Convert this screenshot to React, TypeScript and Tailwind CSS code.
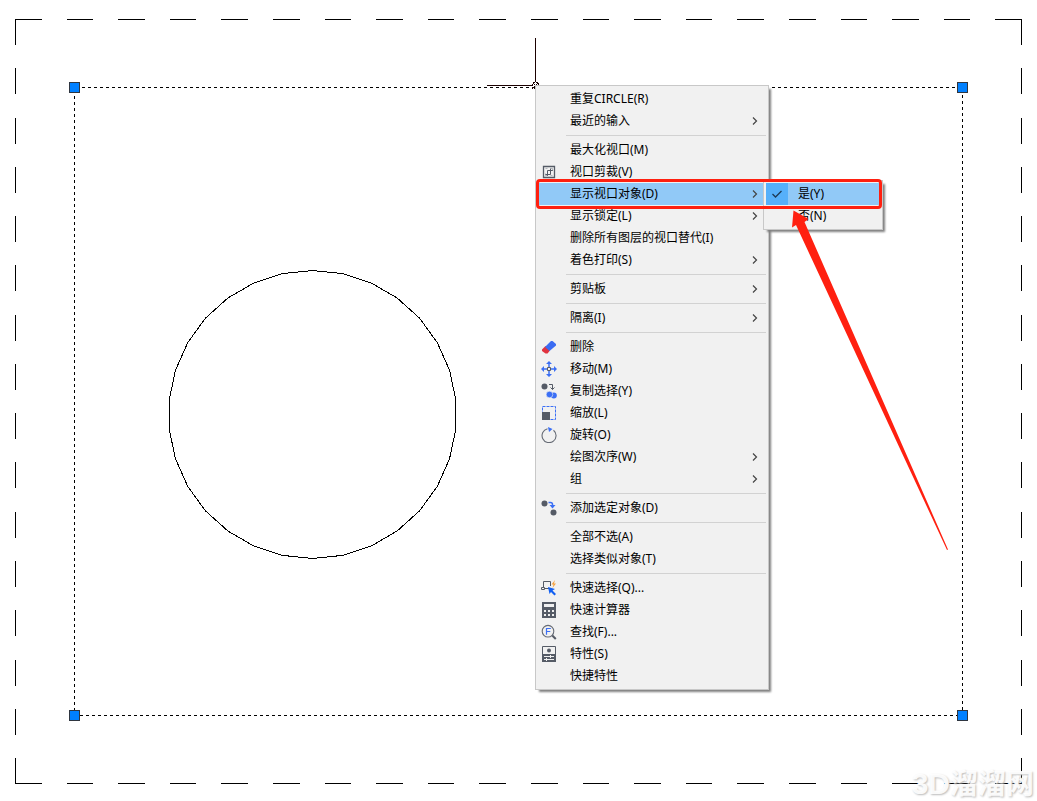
import { Fragment, type ReactNode } from "react";

type Item = { label: string; icon?: ReactNode; sub?: boolean; active?: boolean };

const Icon = ({ children }: { children: ReactNode }) => (
  <svg width="16" height="16" viewBox="0 0 16 16" fill="none" aria-hidden="true">
    {children}
  </svg>
);

const ClipIcon = (
  <Icon>
    <path d="M2.500 2.500h11v11h-11z" stroke="#555b66" strokeWidth="1.300" />
    <path d="M4 10.500h5.500V4.500M6.500 12V6.500H12" stroke="#555b66" />
    <path d="M4.500 4.500h2v0M11.500 11.500h-2M9.500 4.500h2v2M4.500 9.500v2h2" stroke="#9a9ea6" strokeWidth=".7" />
  </Icon>
);

const EraseIcon = (
  <Icon>
    <path d="M1 10.500 4.500 7 9 11.500 6.500 14.500H4.500L1 12z" fill="#e0333f" />
    <path d="M4 8 10 2h1.500L15 5v1.500L8.500 12z" fill="#3b6cf2" />
  </Icon>
);

const MoveIcon = (
  <Icon>
    <path d="M8 2v4M8 10v4M2 8h4M10 8h4" stroke="#3b6ff5" strokeWidth="1.500" />
    <path d="M8 0 11 3H5zM8 16 11 13H5zM0 8 3 5v6zM16 8 13 5v6z" fill="#3b6ff5" />
    <path d="M6.500 6.500h3v3h-3z" stroke="#555b66" fill="#f0f0f0" />
  </Icon>
);

const CopyIcon = (
  <Icon>
    <circle cx="3.500" cy="3.500" r="3" fill="#555b66" />
    <path d="M8 1.500h3.500v5M9.500 4.500l2 2 2-2" stroke="#555b66" />
    <circle cx="12.800" cy="12.500" r="3" fill="#3b6ff5" />
    <circle cx="8.500" cy="11.500" r="3.300" fill="#3b6ff5" stroke="#f0f0f0" strokeWidth=".6" />
  </Icon>
);

const ScaleIcon = (
  <Icon>
    <path d="M1.500 1.500h13v13h-13z" stroke="#3b6ff5" strokeDasharray="3 1" />
    <path d="M1 7h8v8H1z" fill="#555b66" />
  </Icon>
);

const RotateIcon = (
  <Icon>
    <path d="M12.500 3.200A7 7 0 1 1 6.500 1.800" stroke="#666b75" strokeWidth="1.100" />
    <path d="M7 0 11.500 2 8 5z" fill="#3b6ff5" />
  </Icon>
);

const AddIcon = (
  <Icon>
    <circle cx="3.500" cy="3.500" r="3" fill="#555b66" />
    <circle cx="12.500" cy="12.500" r="3" fill="#555b66" />
    <path d="M7.500 2.500h2a2 2 0 0 1 2 2v1" stroke="#3b6ff5" strokeWidth="1.500" />
    <path d="M8.500 5h6l-3 3.500z" fill="#3b6ff5" />
  </Icon>
);

const QuickSelectIcon = (
  <Icon>
    <path d="M2.500 7V1.500h7V6M4 8.500h4" stroke="#555b66" />
    <path d="M.5 7.500h3v2h-3z" stroke="#555b66" />
    <path d="M14 0 10.500 4.500h2L11.500 8 15 3.500h-2z" fill="#f7a13c" />
    <path d="M7 7l7 2-2.500 1.500 3.500 3.500-1.500 1.500-3.500-3.500L8.500 14z" fill="#1260f2" />
  </Icon>
);

const CalcIcon = (
  <Icon>
    <path d="M1 0h14v16H1z" fill="#555b66" />
    <path
      d="M3 2h10v3H3zM3 8h2v2H3zM7 8h2v2H7zM11 8h2v2h-2zM3 12h2v2H3zM7 12h2v2H7zM11 12h2v2h-2z"
      fill="#f0f0f0"
    />
  </Icon>
);

const FindIcon = (
  <Icon>
    <circle cx="7" cy="7.200" r="5.800" stroke="#666b75" strokeWidth="1.100" />
    <path d="M11.300 11.500 14.800 15" stroke="#555b66" strokeWidth="2" />
    <path d="M5.500 10.800V4M5 4.500h4.800M5.500 7.500h3.800" stroke="#3b6ff5" strokeWidth="1.200" />
  </Icon>
);

const PropsIcon = (
  <Icon>
    <path d="M1.500 .5h13v15h-13z" stroke="#555b66" />
    <path d="M1 8h14v8H1z" fill="#555b66" />
    <circle cx="8" cy="4.500" r="2" fill="#555b66" />
    <path d="M3 10.500h10M3 13.500h10M9.500 9v3M5.500 12v3" stroke="#f0f0f0" />
  </Icon>
);

const groups: Item[][] = [
  [{ label: "重复CIRCLE(R)" }, { label: "最近的输入", sub: true }],
  [
    { label: "最大化视口(M)" },
    { label: "视口剪裁(V)", icon: ClipIcon },
    { label: "显示视口对象(D)", sub: true, active: true },
    { label: "显示锁定(L)", sub: true },
    { label: "删除所有图层的视口替代(I)" },
    { label: "着色打印(S)", sub: true },
  ],
  [{ label: "剪贴板", sub: true }],
  [{ label: "隔离(I)", sub: true }],
  [
    { label: "删除", icon: EraseIcon },
    { label: "移动(M)", icon: MoveIcon },
    { label: "复制选择(Y)", icon: CopyIcon },
    { label: "缩放(L)", icon: ScaleIcon },
    { label: "旋转(O)", icon: RotateIcon },
    { label: "绘图次序(W)", sub: true },
    { label: "组", sub: true },
  ],
  [{ label: "添加选定对象(D)", icon: AddIcon }],
  [{ label: "全部不选(A)" }, { label: "选择类似对象(T)" }],
  [
    { label: "快速选择(Q)...", icon: QuickSelectIcon },
    { label: "快速计算器", icon: CalcIcon },
    { label: "查找(F)...", icon: FindIcon },
    { label: "特性(S)", icon: PropsIcon },
    { label: "快捷特性" },
  ],
];

function MenuRow({ item }: { item: Item }) {
  return (
    <button
      role="menuitem"
      className={`flex h-[22px] w-full items-center text-left ${item.active ? "bg-[#91c9f7]" : ""}`}
    >
      <span className="flex w-8 shrink-0 pl-[3px]">{item.icon}</span>
      <span className="grow whitespace-nowrap">{item.label}</span>
      {item.sub && (
        <svg width="6" height="8" viewBox="0 0 6 8" fill="none" className="mr-2" aria-hidden="true">
          <path d="M1 .5 4.500 4 1 7.500" stroke="#444" strokeWidth="1.200" />
        </svg>
      )}
    </button>
  );
}

function Grip({ x, y }: { x: number; y: number }) {
  return <rect x={x - 5} y={y - 5} width="10" height="10" fill="#0080ff" stroke="#2f3640" />;
}

// The circle is displayed as a 30-sided polygon, as the viewport tessellates it.
const circlePoints = Array.from({ length: 30 }, (_, i) => {
  const angle = (i * 12 * Math.PI) / 180;
  return `${(312.5 + 144 * Math.sin(angle)).toFixed(1)},${(414.5 - 144 * Math.cos(angle)).toFixed(1)}`;
}).join(" ");

function Drawing() {
  return (
    <svg width="1037" height="801" viewBox="0 0 1037 801" fill="none" className="block" aria-label="图纸">
      <g stroke="#000" shapeRendering="crispEdges">
        <path d="M15 19.500H1022M15 783.500H1022" strokeDasharray="26.600 25" />
        <path d="M15.500 19V784M1021.500 19V784" strokeDasharray="26 23.270" />
        <path d="M82 87.500H962M80 715.500H962" strokeDasharray="3 3" />
        <path d="M74.500 96V715" strokeDasharray="3 3" />
        <path d="M962.500 95V715" strokeDasharray="3 3" />
        <path d="M535.500 38V82M487 85.500H533" stroke="#1a0000" />
        <path d="M532.500 82.500h6v6h-6z" stroke="#1a0000" strokeDasharray="2 1" />
        <path d="M533 83l5 5M538 83l-5 5" stroke="#1a0000" />
        <polygon points={circlePoints} />
      </g>
      <Grip x={74.5} y={87.5} />
      <Grip x={962.5} y={87.5} />
      <Grip x={74.5} y={715.5} />
      <Grip x={962.5} y={715.5} />
    </svg>
  );
}

export default function App() {
  return (
    <main className="relative min-h-screen overflow-hidden bg-white font-['Noto_Sans','Noto_Sans_CJK_SC',sans-serif] text-[12px] leading-[22px] text-black">
      <Drawing />

      <div
        role="menu"
        className="absolute top-[85px] left-[535px] w-[234px] border border-[#c8c8c8] bg-[#f1f1f1] p-[2px] shadow-[3px_3px_2px_-1px_#808080]"
      >
        {groups.map((group, i) => (
          <Fragment key={i}>
            {i > 0 && <hr className="my-[3px] ml-7 border-t border-[#d2d2d2]" />}
            {group.map((item) => (
              <MenuRow key={item.label} item={item} />
            ))}
          </Fragment>
        ))}
      </div>

      <div
        role="menu"
        className="absolute top-[180px] left-[763px] w-[120px] border border-[#c8c8c8] bg-[#f1f1f1] p-[2px] shadow-[3px_3px_2px_-1px_#808080]"
      >
        <button role="menuitem" className="flex h-[22px] w-full items-center bg-[#91c9f7] text-left">
          <span className="flex size-[22px] items-center justify-center bg-[#56b0fa]">
            <svg width="10" height="8" viewBox="0 0 10 8" fill="none" aria-hidden="true">
              <path d="M.5 4 3.500 7 9.500 1" stroke="#1d3a55" strokeWidth="1.300" />
            </svg>
          </span>
          <span className="pl-[10px]">是(Y)</span>
        </button>
        <button role="menuitem" className="flex h-[22px] w-full items-center pl-8 text-left">
          否(N)
        </button>
      </div>

      <div className="pointer-events-none absolute top-[179px] left-[536px] h-[30px] w-[346px] rounded-[4px] border-3 border-[#ff2010]" />
      <svg
        width="170"
        height="350"
        viewBox="0 0 170 350"
        fill="#ff2010"
        className="pointer-events-none absolute top-[205px] left-[785px]"
        aria-hidden="true"
      >
        <path d="M8.500 5.500 23.500 14 19.500 17 163 344.500 162 345 11 20 7 22.500z" />
      </svg>

      <div className="pointer-events-none absolute right-[3px] bottom-0 font-['Liberation_Sans','Noto_Sans_CJK_SC',sans-serif] text-[28px] leading-[32px] font-bold text-white/90 [text-shadow:1px_1px_2px_#bbb]">
        <span className="text-[30px]">3D</span>溜溜网
      </div>
    </main>
  );
}
